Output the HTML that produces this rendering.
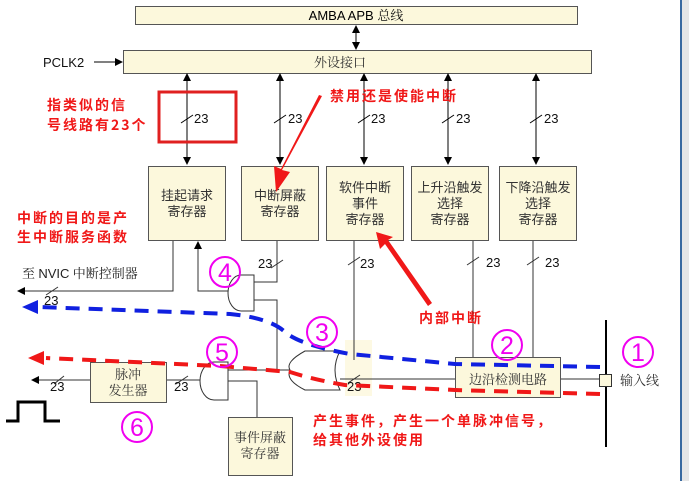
<!DOCTYPE html>
<html><head><meta charset="utf-8"><style>
html,body{margin:0;padding:0;background:#fff;}
svg{display:block;}
text{font-family:"Liberation Sans","Noto Sans CJK SC",sans-serif;}
.s{font-family:"Noto Serif CJK SC","Liberation Serif",serif;fill:#333;font-size:13px;}
.r{font-family:"Noto Sans CJK SC",sans-serif;fill:#f01818;font-size:14px;font-weight:bold;letter-spacing:2px;}
.mt{font-family:"Liberation Serif",serif;fill:#f000f0;font-size:25px;}
.n{font-size:13px;fill:#111;}
</style></head><body>
<svg width="689" height="481" viewBox="0 0 689 481" xmlns="http://www.w3.org/2000/svg">
<defs>
<marker id="a" markerWidth="8" markerHeight="8" refX="7" refY="4" orient="auto" markerUnits="userSpaceOnUse"><path d="M0,0L8,4L0,8z" fill="#000"/></marker>
<marker id="as" markerWidth="8" markerHeight="8" refX="1" refY="4" orient="auto" markerUnits="userSpaceOnUse"><path d="M8,0L0,4L8,8z" fill="#000"/></marker>
</defs>
<rect x="682" y="0" width="7" height="481" fill="#e6e6e6"/>
<rect x="680" y="0" width="2" height="481" fill="#3a6aa0"/>
<rect x="135.5" y="6.5" width="442" height="18" fill="#fcf8dc" stroke="#555"/>
<text x="356" y="20" text-anchor="middle" font-size="13">AMBA APB <tspan class="s" style="fill:#111">总线</tspan></text>
<line x1="356" y1="26" x2="356" y2="49" stroke="#000" marker-end="url(#a)" marker-start="url(#as)"/>
<rect x="123.5" y="50.5" width="468" height="23" fill="#fcf8dc" stroke="#555"/>
<text x="340" y="67" text-anchor="middle" class="s">外设接口</text>
<text x="43" y="67" font-size="13" fill="#111">PCLK2</text>
<line x1="94" y1="62" x2="122" y2="62" stroke="#000" marker-end="url(#a)"/>
<g stroke="#000">
<line x1="187" y1="74" x2="187" y2="164" marker-end="url(#a)" marker-start="url(#as)"/>
<line x1="280" y1="74" x2="280" y2="164" marker-end="url(#a)" marker-start="url(#as)"/>
<line x1="364" y1="74" x2="364" y2="164" marker-end="url(#a)" marker-start="url(#as)"/>
<line x1="448" y1="74" x2="448" y2="164" marker-end="url(#a)" marker-start="url(#as)"/>
<line x1="536" y1="74" x2="536" y2="164" marker-end="url(#a)" marker-start="url(#as)"/>
<line x1="181" y1="123" x2="193" y2="115"/><line x1="274" y1="123" x2="286" y2="115"/>
<line x1="358" y1="123" x2="370" y2="115"/><line x1="442" y1="123" x2="454" y2="115"/>
<line x1="530" y1="123" x2="542" y2="115"/>
</g>
<g class="n"><text x="194" y="123">23</text><text x="288" y="123">23</text><text x="371" y="123">23</text><text x="456" y="123">23</text><text x="544" y="123">23</text></g>
<rect x="159" y="92" width="77" height="50" fill="none" stroke="#e02020" stroke-width="3"/>
<g fill="#fcf8dc" stroke="#555">
<rect x="148.5" y="166.5" width="77" height="74"/>
<rect x="241.5" y="166.5" width="77" height="74"/>
<rect x="326.5" y="166.5" width="77" height="74"/>
<rect x="411.5" y="166.5" width="77" height="74"/>
<rect x="499.5" y="166.5" width="77" height="74"/>
</g>
<g class="s" text-anchor="middle">
<text x="187" y="200">挂起请求</text><text x="187" y="216">寄存器</text>
<text x="280" y="200">中断屏蔽</text><text x="280" y="216">寄存器</text>
<text x="365" y="192">软件中断</text><text x="365" y="208">事件</text><text x="365" y="224">寄存器</text>
<text x="450" y="192">上升沿触发</text><text x="450" y="208">选择</text><text x="450" y="224">寄存器</text>
<text x="538" y="192">下降沿触发</text><text x="538" y="208">选择</text><text x="538" y="224">寄存器</text>
</g>
<rect x="345" y="340" width="27" height="56" fill="#fcf8dc" opacity="0.8"/>
<g stroke="#333" fill="none">
<polyline points="173,241 173,291 18,291" marker-end="url(#a)"/>
<polyline points="228,291 198,291 198,242" marker-end="url(#a)"/>
<polyline points="254,282 277,282 277,241"/>
<polyline points="254,300 277,300 277,370"/>
<line x1="271" y1="268" x2="283" y2="260"/>
<path d="M254,275 L241,275 A13,18 0 0 0 241,311 L254,311 Z" fill="#fff"/>
<path d="M340,351 L305,351 Q285,362 290,370 Q285,380 305,390 L340,390 Q330,370 340,351 Z" fill="#fff"/>
<line x1="228" y1="370" x2="290" y2="370"/>
<line x1="354" y1="241" x2="354" y2="360"/>
<line x1="340" y1="379" x2="455" y2="379"/>
<line x1="473" y1="241" x2="473" y2="358"/>
<line x1="533" y1="241" x2="533" y2="358"/>
<line x1="467" y1="265" x2="479" y2="257"/><line x1="527" y1="265" x2="539" y2="257"/>
<line x1="348" y1="265" x2="360" y2="257"/>
<line x1="560" y1="379" x2="599" y2="379"/>
<path d="M228,362 L214,362 A14,19 0 0 0 214,400 L228,400 Z" fill="#fff"/>
<polyline points="228,381 257,381 257,417"/>
<line x1="200" y1="380" x2="166" y2="380"/>
<line x1="90" y1="380" x2="32" y2="380" marker-end="url(#a)"/>
<line x1="54" y1="384" x2="64" y2="376"/><line x1="176" y1="384" x2="188" y2="376"/>
<line x1="46" y1="295" x2="58" y2="287"/>
<line x1="348" y1="383" x2="360" y2="375"/>
</g>
<g class="n"><text x="258" y="268">23</text><text x="360" y="268">23</text><text x="486" y="267">23</text><text x="545" y="267">23</text>
<text x="44" y="305">23</text><text x="50" y="391">23</text><text x="174" y="391">23</text><text x="347" y="391">23</text></g>
<text x="22" y="278" class="s" style="fill:#222">至 <tspan font-family="Liberation Sans">NVIC</tspan> 中断控制器</text>
<rect x="455.5" y="357.5" width="105" height="40" fill="#fcf8dc" stroke="#555"/>
<text x="508" y="384" text-anchor="middle" class="s">边沿检测电路</text>
<rect x="90.5" y="362.5" width="76" height="40" fill="#fcf8dc" stroke="#555"/>
<text x="128" y="379" text-anchor="middle" class="s">脉冲</text><text x="128" y="395" text-anchor="middle" class="s">发生器</text>
<rect x="228.5" y="417.5" width="64" height="58" fill="#fcf8dc" stroke="#555"/>
<text x="260" y="442" text-anchor="middle" class="s">事件屏蔽</text><text x="260" y="458" text-anchor="middle" class="s">寄存器</text>
<line x1="606" y1="320" x2="606" y2="447" stroke="#000" stroke-width="2"/>
<rect x="599.5" y="374.5" width="12" height="12" fill="#fcf8dc" stroke="#333"/>
<text x="620" y="385" class="s">输入线</text>
<polyline points="6,421 18,421 18,402 45,402 45,421 60,421" fill="none" stroke="#000" stroke-width="3"/>
<path d="M600,367 L455,364 L350,354 Q300,345 285,332 Q270,318 230,314 L40,307" fill="none" stroke="#1020e0" stroke-width="4" stroke-dasharray="14,9"/>
<path d="M22,307 L38,300 L38,314 Z" fill="#1020e0"/>
<path d="M600,394 L455,390 L345,385 Q315,380 290,372 L220,366 L46,358" fill="none" stroke="#f01818" stroke-width="4" stroke-dasharray="14,9"/>
<path d="M28,358 L44,351 L44,365 Z" fill="#f01818"/>
<path d="M322,96 L282,170 L290,172 L276,192 L274,166 L281,169 L319,95Z" fill="#f01818"/>
<path d="M432,303 L388,240 L393,237 L376,232 L380,249 L385,244 L428,306Z" fill="#f01818"/>
<text class="r" x="47" y="110">指类似的信</text><text class="r" x="47" y="130">号线路有23个</text>
<text class="r" x="330" y="101">禁用还是使能中断</text>
<text class="r" x="17" y="223">中断的目的是产</text><text class="r" x="17" y="242">生中断服务函数</text>
<text class="r" x="419" y="323">内部中断</text>
<text class="r" x="313" y="426">产生事件，产生一个单脉冲信号，</text>
<text class="r" x="313" y="445">给其他外设使用</text>
<g fill="none" stroke="#f000f0" stroke-width="2">
<circle cx="638" cy="352" r="15"/><circle cx="507" cy="345" r="15"/><circle cx="322" cy="332" r="15"/>
<circle cx="225" cy="272" r="15"/><circle cx="222" cy="352" r="15"/><circle cx="137" cy="427" r="15"/>
</g>
<g class="mt" text-anchor="middle"><text x="638" y="361">1</text><text x="507" y="354">2</text><text x="322" y="341">3</text><text x="225" y="281">4</text><text x="222" y="361">5</text><text x="137" y="436">6</text></g>
</svg>
</body></html>
